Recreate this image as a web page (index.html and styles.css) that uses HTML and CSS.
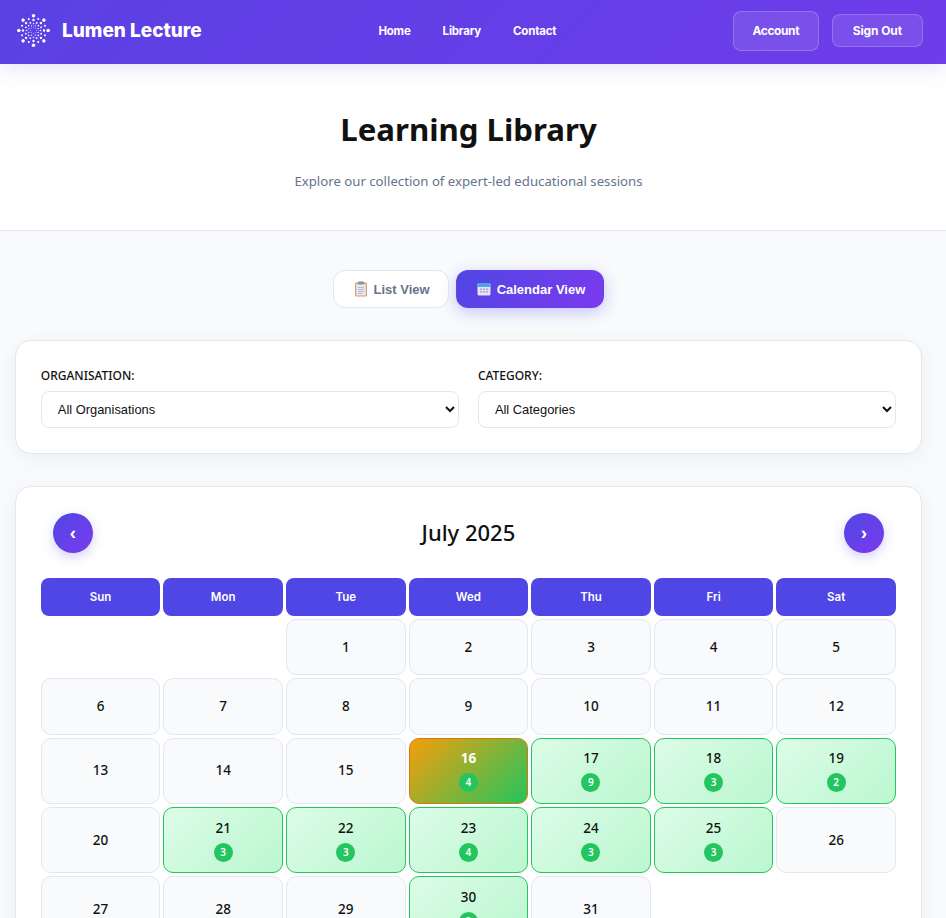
FILE: index.html
```html
<!DOCTYPE html>
<html lang="en">
<head>
  <meta charset="UTF-8">
  <meta name="viewport" content="width=device-width, initial-scale=1.0">
  <title>Learning Library - Lumen Lecture</title>
  <link rel="stylesheet" href="styles.css">
</head>
<body>
  <header class="topbar">
    <a class="brand" href="#">
      <svg class="brand-mark" viewBox="0 0 36 36" width="33" height="33" fill="#fff">
        <defs>
          <g id="petal">
            <circle cx="18" cy="2" r="1.9"/>
            <circle cx="18" cy="6.500" r="1.300"/>
            <circle cx="23.170" cy="5.530" r="1.100"/>
            <circle cx="21.440" cy="9.690" r="1"/>
            <circle cx="18" cy="10.500" r=".8"/>
            <circle cx="20.100" cy="12.920" r=".7"/>
            <circle cx="18" cy="14.500" r=".5"/>
          </g>
        </defs>
        <use href="#petal"/>
        <use href="#petal" transform="rotate(45 18 18)"/>
        <use href="#petal" transform="rotate(90 18 18)"/>
        <use href="#petal" transform="rotate(135 18 18)"/>
        <use href="#petal" transform="rotate(180 18 18)"/>
        <use href="#petal" transform="rotate(225 18 18)"/>
        <use href="#petal" transform="rotate(270 18 18)"/>
        <use href="#petal" transform="rotate(315 18 18)"/>
      </svg>
      <span class="brand-name">Lumen Lecture</span>
    </a>
    <nav class="main-nav">
      <a href="#">Home</a>
      <a href="#">Library</a>
      <a href="#">Contact</a>
    </nav>
    <div class="user-actions">
      <a class="top-btn top-btn-tall" href="#">Account</a>
      <a class="top-btn" href="#">Sign Out</a>
    </div>
  </header>

  <section class="hero">
    <h1>Learning Library</h1>
    <p>Explore our collection of expert-led educational sessions</p>
  </section>

  <main class="content">
    <div class="view-toggle">
      <button class="view-btn">
        <svg viewBox="0 0 14 16" width="14" height="16">
          <rect x="1" y="1.500" width="12" height="14" rx="1" fill="#d9a074"/>
          <rect x="2.200" y="3" width="9.600" height="11.500" fill="#e9e6f2"/>
          <rect x="4" y=".5" width="6" height="3" rx=".8" fill="#8a8f9c"/>
          <path d="M4 6.500h6M4 8.500h6M4 10.500h6M4 12.500h4" stroke="#b4b6c6" stroke-width=".9"/>
        </svg>
        List View
      </button>
      <button class="view-btn active">
        <svg viewBox="0 0 14 14" width="14" height="14">
          <rect x=".5" y="1" width="13" height="12.500" rx="1.500" fill="#e6e3f3"/>
          <path d="M.5 5V2.500A1.500 1.500 0 0 1 2 1h10a1.500 1.500 0 0 1 1.500 1.500V5z" fill="#4fa3e8"/>
          <path d="M3 6.500h2v1.500H3zM6 6.500h2v1.500H6zM9 6.500h2v1.500H9zM3 9h2v1.500H3zM6 9h2v1.500H6zM9 9h2v1.500H9z" fill="#a9a3cf"/>
        </svg>
        Calendar View
      </button>
    </div>

    <section class="card filters">
      <div class="filter-group">
        <label for="org">Organisation:</label>
        <select id="org"><option>All Organisations</option></select>
      </div>
      <div class="filter-group">
        <label for="cat">Category:</label>
        <select id="cat"><option>All Categories</option></select>
      </div>
    </section>

    <section class="card calendar">
      <div class="cal-head">
        <button class="month-btn">‹</button>
        <h2>July 2025</h2>
        <button class="month-btn">›</button>
      </div>
      <div class="cal-grid">
        <div class="dow">Sun</div><div class="dow">Mon</div><div class="dow">Tue</div><div class="dow">Wed</div><div class="dow">Thu</div><div class="dow">Fri</div><div class="dow">Sat</div>

        <div class="blank"></div><div class="blank"></div>
        <div class="day">1</div><div class="day">2</div><div class="day">3</div><div class="day">4</div><div class="day">5</div>

        <div class="day">6</div><div class="day">7</div><div class="day">8</div><div class="day">9</div><div class="day">10</div><div class="day">11</div><div class="day">12</div>

        <div class="day">13</div><div class="day">14</div><div class="day">15</div>
        <div class="day today">16<span class="count">4</span></div>
        <div class="day has">17<span class="count">9</span></div>
        <div class="day has">18<span class="count">3</span></div>
        <div class="day has">19<span class="count">2</span></div>

        <div class="day">20</div>
        <div class="day has">21<span class="count">3</span></div>
        <div class="day has">22<span class="count">3</span></div>
        <div class="day has">23<span class="count">4</span></div>
        <div class="day has">24<span class="count">3</span></div>
        <div class="day has">25<span class="count">3</span></div>
        <div class="day">26</div>

        <div class="day">27</div><div class="day">28</div><div class="day">29</div>
        <div class="day has">30<span class="count">3</span></div>
        <div class="day">31</div>
      </div>
    </section>
  </main>
</body>
</html>
```

FILE: styles.css
```css
/* General */
* {
  margin: 0;
  padding: 0;
  box-sizing: border-box;
}

html {
  overflow: hidden;
}

body {
  font-family: 'Noto Sans', 'Open Sans', sans-serif;
  background: #f8fafc;
  color: #111;
}

a {
  color: inherit;
  text-decoration: none;
}

/* Top bar */
.topbar {
  height: 64px;
  display: flex;
  align-items: center;
  justify-content: space-between;
  padding: 0 23px 0 15px;
  background: linear-gradient(135deg, #5a41e4, #6e3ce9);
  color: #fff;
  box-shadow: 0 4px 20px rgba(79, 70, 229, 0.15);
  position: relative;
}

.brand {
  display: flex;
  align-items: center;
  gap: 12px;
  padding: 0 0 3px 2px;
}

.brand-name {
  font-family: Inter, sans-serif;
  font-size: 19px;
  font-weight: 800;
}

.main-nav {
  display: flex;
  gap: 32px;
  font-family: Inter, sans-serif;
  font-size: 11.5px;
  font-weight: 700;
  letter-spacing: -0.2px;
  padding-bottom: 2px;
}

.user-actions {
  display: flex;
  align-items: center;
  gap: 13px;
  padding-bottom: 3px;
}

.top-btn {
  display: block;
  padding: 8px 20px;
  font-family: Inter, sans-serif;
  font-size: 12px;
  font-weight: 700;
  letter-spacing: -0.1px;
  line-height: 15px;
  background: rgba(255, 255, 255, 0.1);
  border: 1px solid rgba(255, 255, 255, 0.2);
  border-radius: 8px;
}

.top-btn-tall {
  padding: 11px 18.5px;
  line-height: 16px;
  letter-spacing: -0.4px;
}

/* Hero */
.hero {
  height: 167px;
  padding-top: 42px;
  padding-right: 9px;
  background: #fff;
  border-bottom: 1px solid #e2e8f0;
  text-align: center;
}

.hero h1 {
  font-size: 31.2px;
  font-weight: 700;
  line-height: 46px;
  color: #111;
}

.hero p {
  margin-top: 19px;
  font-size: 13.2px;
  line-height: 20px;
  color: #64748b;
}

/* Page content */
.content {
  padding: 39px 24px 40px 14.8px;
}

.view-toggle {
  display: flex;
  justify-content: center;
  gap: 7px;
  margin-bottom: 32px;
}

.view-btn {
  display: flex;
  align-items: center;
  gap: 6px;
  height: 38px;
  padding: 0 18px 0 20px;
  font-family: 'Liberation Sans', Arial, sans-serif;
  font-size: 13px;
  font-weight: 700;
  color: #64748b;
  background: #fff;
  border: 1px solid #e2e8f0;
  border-radius: 12px;
}

.view-btn.active {
  color: #fff;
  border-color: transparent;
  background: linear-gradient(135deg, #4f46e5, #7c3aed);
  box-shadow: 0 4px 15px rgba(79, 70, 229, 0.3);
}

.card {
  background: #fff;
  border: 1px solid #e2e8f0;
  border-radius: 16px;
  box-shadow: 0 4px 20px rgba(0, 0, 0, 0.05);
}

/* Filters */
.filters {
  display: grid;
  grid-template-columns: 1fr 1fr;
  gap: 19px;
  padding: 26px 25px 25px;
  margin-bottom: 32px;
}

.filter-group label {
  display: block;
  font-size: 12px;
  font-weight: 500;
  line-height: 17px;
  margin-bottom: 7px;
  text-transform: uppercase;
}

.filter-group select {
  width: 100%;
  height: 37px;
  padding: 0 12px;
  font-family: 'Liberation Sans', Arial, sans-serif;
  font-size: 12.9px;
  color: #111;
  background: #fff;
  border: 1px solid #e2e8f0;
  border-radius: 8px;
}

/* Calendar */
.calendar {
  padding: 26px 25px 40px;
}

.cal-head {
  display: flex;
  align-items: center;
  justify-content: space-between;
  padding: 0 12px;
  margin-bottom: 25px;
}

.cal-head h2 {
  padding-bottom: 2px;
  font-size: 22px;
  font-weight: 500;
  color: #111;
}

.month-btn {
  width: 40px;
  height: 40px;
  border: none;
  border-radius: 50%;
  font-family: 'Liberation Sans', Arial, sans-serif;
  font-size: 19px;
  font-weight: 700;
  color: #fff;
  background: linear-gradient(135deg, #4f46e5, #7c3aed);
  box-shadow: 0 4px 12px rgba(79, 70, 229, 0.25);
}

.cal-grid {
  display: grid;
  grid-template-columns: repeat(7, 1fr);
  gap: 3px;
}

.dow {
  height: 38px;
  display: flex;
  align-items: center;
  justify-content: center;
  font-family: Inter, sans-serif;
  font-size: 11.5px;
  font-weight: 600;
  color: #fff;
  background: #4f46e5;
  border-radius: 8px;
}

.day {
  min-height: 56.45px;
  display: flex;
  flex-direction: column;
  align-items: center;
  justify-content: center;
  gap: 5px;
  font-size: 13.5px;
  font-weight: 500;
  line-height: 19px;
  background: #f8fafc;
  border: 1px solid #e2e8f0;
  border-radius: 10px;
}

.day.has,
.day.today {
  min-height: 66.2px;
}

.day.has {
  background: linear-gradient(135deg, #dcfce7, #bbf7d0);
  border-color: #22c55e;
}

.day.today {
  color: #fff;
  font-weight: 700;
  background: linear-gradient(135deg, #f59e0b, #22c55e);
  border-color: #d97706;
}

.count {
  width: 19px;
  height: 19px;
  display: flex;
  align-items: center;
  justify-content: center;
  font-size: 10px;
  font-weight: 600;
  color: #fff;
  background: #22c55e;
  border-radius: 50%;
}
```
